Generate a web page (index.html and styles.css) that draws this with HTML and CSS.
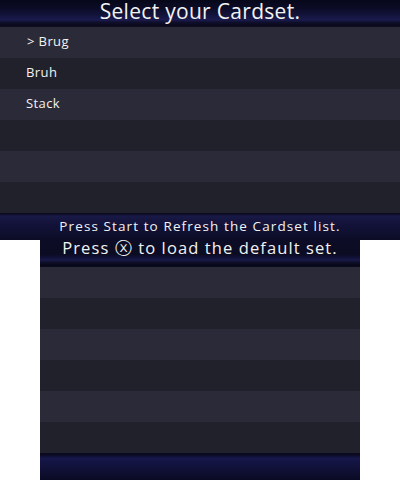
FILE: index.html
```html
<!DOCTYPE html>
<html>
<head>
<meta charset="utf-8">
<link rel="stylesheet" href="styles.css">
</head>
<body>
<div class="top">
  <div class="head"><span class="title">Select your Cardset.</span></div>
  <div class="rows">
    <div class="row light"><span class="item sel">&gt; Brug</span></div>
    <div class="row dark"><span class="item">Bruh</span></div>
    <div class="row light"><span class="item">Stack</span></div>
    <div class="row dark"></div>
    <div class="row light"></div>
    <div class="row dark"></div>
  </div>
  <div class="topfoot"><span class="hint">Press Start to Refresh the Cardset list.</span></div>
</div>
<div class="bottom">
  <div class="bhead"><span class="hint2">Press ⓧ to load the default set.</span></div>
  <div class="rows">
    <div class="row light"></div>
    <div class="row dark"></div>
    <div class="row light"></div>
    <div class="row dark"></div>
    <div class="row light"></div>
    <div class="row dark"></div>
  </div>
  <div class="bfoot"></div>
</div>
</body>
</html>
```
FILE: styles.css
```css
html, body {
  margin: 0;
  padding: 0;
  background: #ffffff;
}
body {
  width: 400px;
  height: 480px;
  font-family: "Open Sans", "DejaVu Sans", sans-serif;
  color: #f2f2f2;
}
.top {
  width: 400px;
  height: 240px;
  display: flex;
  flex-direction: column;
}
.bottom {
  width: 320px;
  height: 240px;
  margin: 0 auto;
  display: flex;
  flex-direction: column;
}
.head {
  height: 27px;
  display: flex;
  justify-content: center;
  align-items: flex-start;
  background: linear-gradient(#07071a 0, #0b0b26 8px, #121238 14px, #1b1b4e 20px, #10102e 22px, #0a0a1c 25px, #0d0d1e 27px);
}
.title {
  font-size: 21px;
  line-height: 22px;
  letter-spacing: 0.3px;
}
.rows {
  display: flex;
  flex-direction: column;
}
.row {
  height: 31px;
  display: flex;
  align-items: center;
}
.light { background: #2b2a38; }
.dark { background: #21212b; }
.item {
  font-size: 13px;
  letter-spacing: 0.4px;
  padding-left: 26px;
  padding-bottom: 4px;
}
.sel { padding-left: 27px; }
.topfoot {
  height: 27px;
  display: flex;
  justify-content: center;
  align-items: flex-start;
  background: linear-gradient(#0a0a1e 0, #0c0c24 1px, #191948 3px, #14143e 8px, #101032 18px, #0c0c26 27px);
}
.hint {
  font-size: 13.5px;
  line-height: 27px;
  letter-spacing: 1.1px;
}
.bhead {
  height: 27px;
  display: flex;
  justify-content: center;
  align-items: flex-start;
  background: linear-gradient(#0c0c26 0, #0b0b22 14px, #12123a 18px, #1a1a4a 20px, #10102c 22px, #07071a 25px, #0a0a1c 27px);
}
.hint2 {
  font-size: 16.5px;
  line-height: 15px;
  letter-spacing: 1.1px;
}
.bfoot {
  height: 27px;
  background: linear-gradient(#0a0a20 0, #0b0b24 2px, #17174a 5px, #131342 10px, #0e0e30 20px, #0a0a24 27px);
}
```
